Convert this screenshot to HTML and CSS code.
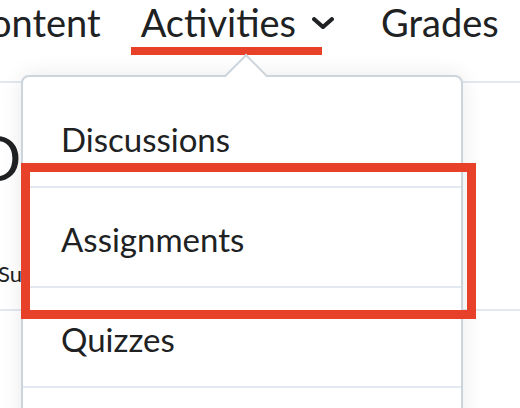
FILE: index.html
```html
<!DOCTYPE html>
<html lang="en">
<head>
<meta charset="utf-8">
<title>Activities menu</title>
<link rel="stylesheet" href="styles.css">
</head>
<body>
  <header class="nav">
    <span class="nav-item nav-content">Content</span>
    <span class="nav-item nav-active">Activities
      <svg class="chevron" viewBox="0 0 22 12" width="22" height="12" aria-hidden="true">
        <path d="M2.2 2.2 L11 10 L19.8 2.2" fill="none" stroke="#202122" stroke-width="4.2" stroke-linecap="round" stroke-linejoin="round"/>
      </svg>
    </span>
    <span class="nav-item nav-grades">Grades</span>
  </header>
  <main class="page">
    <h1 class="title">Discussions</h1>
    <p class="subtitle">Subscriptions</p>
  </main>

  <div class="underline-mark"></div>

  <nav class="dropdown">
    <span class="dropdown-arrow"></span>
    <ul class="menu">
      <li class="menu-item">Discussions</li>
      <li class="menu-item">Assignments</li>
      <li class="menu-item">Quizzes</li>
      <li class="menu-item">Surveys</li>
    </ul>
  </nav>

  <div class="highlight-box"></div>
</body>
</html>
```

FILE: styles.css
```css
* {
  box-sizing: border-box;
}

html, body {
  margin: 0;
  padding: 0;
  width: 520px;
  height: 408px;
  overflow: hidden;
  background: #ffffff;
}

body {
  position: relative;
  font-family: Lato, "Open Sans", "Liberation Sans", sans-serif;
  color: #202122;
}

.nav {
  display: flex;
  align-items: flex-start;
  gap: 40px;
  height: 83px;
  margin-left: -35px;
  border-bottom: 2px solid #e3e9f1;
  white-space: nowrap;
}

.nav-item {
  display: flex;
  align-items: center;
  font-size: 38px;
  line-height: 44px;
}

.nav-active {
  gap: 16px;
}

.nav-grades {
  margin-left: 7px;
}

.chevron {
  display: block;
  margin-top: 2px;
}

.page {
  height: 228px;
  border-bottom: 2px solid #e3e9f1;
  white-space: nowrap;
}

.title {
  margin: 0 0 0 -25px;
  padding-top: 40px;
  font-size: 61px;
  font-weight: 400;
  letter-spacing: 8px;
  line-height: 70px;
}

.subtitle {
  margin: 0 0 0 -2px;
  padding-top: 66px;
  font-size: 22px;
  line-height: 30px;
}

.underline-mark {
  position: absolute;
  left: 131px;
  top: 47px;
  width: 191px;
  height: 8px;
  background: #e8412a;
}

.dropdown {
  position: absolute;
  left: 21px;
  top: 75px;
  width: 442px;
  height: 360px;
  background: #ffffff;
  border: 2px solid #cdd5dc;
  border-radius: 8px;
  box-shadow: 0 0 22px rgba(0, 0, 0, 0.09);
  padding-top: 11px;
}

.dropdown-arrow {
  position: absolute;
  left: 208px;
  top: -17px;
  width: 30px;
  height: 30px;
  background: #ffffff;
  border-top: 2px solid #cdd5dc;
  border-left: 2px solid #cdd5dc;
  transform: rotate(45deg);
}

.menu {
  list-style: none;
  margin: 0;
  padding: 0;
}

.menu-item {
  display: flex;
  align-items: center;
  height: 100px;
  padding-left: 38px;
  padding-top: 3px;
  border-bottom: 2px solid #e3e9f1;
  font-size: 33px;
}

.highlight-box {
  position: absolute;
  left: 21px;
  top: 163px;
  width: 455px;
  height: 156px;
  border: 9px solid #e8412a;
}
```
